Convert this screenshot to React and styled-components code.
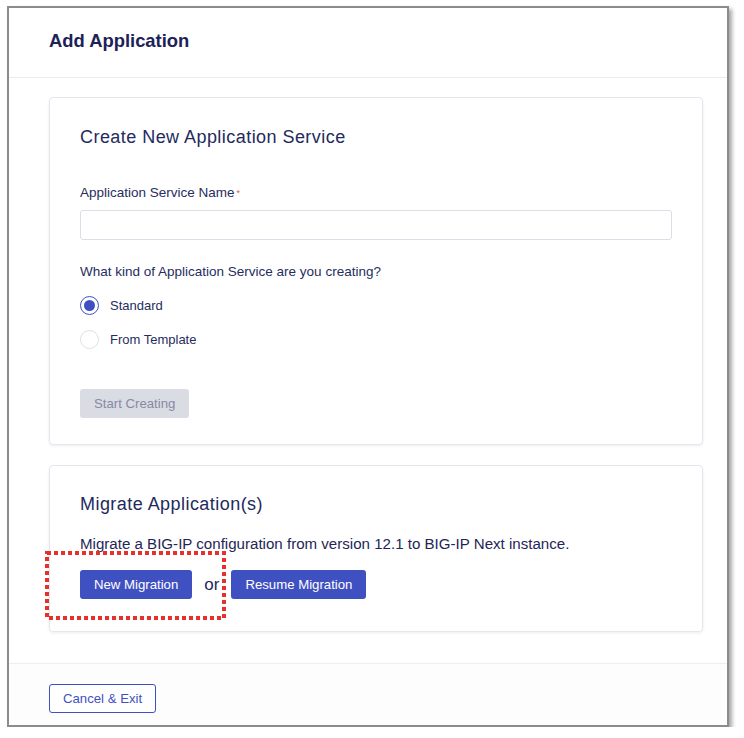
import React from 'react';
import styled, { createGlobalStyle } from 'styled-components';

const GlobalStyle = createGlobalStyle`
  html, body {
    margin: 0;
    padding: 0;
    background: #ffffff;
  }
  body {
    font-family: "Liberation Sans", Arial, sans-serif;
    color: #1f2656;
  }
`;

const Frame = styled.div`
  box-sizing: border-box;
  margin: 6px 0 0 7px;
  width: 722px;
  height: 721px;
  border: 2px solid #8c8c8c;
  box-shadow: 3px 3px 4px rgba(0, 0, 0, 0.35);
  background: #ffffff;
  display: flex;
  flex-direction: column;
`;

const Header = styled.div`
  height: 70px;
  display: flex;
  align-items: center;
  padding: 0 0 3px 40px;
  box-sizing: border-box;
  border-bottom: 1px solid #ebebf2;
`;

const PageTitle = styled.h1`
  margin: 0;
  font-size: 18.4px;
  font-weight: 700;
  color: #1c2257;
`;

const Body = styled.div`
  flex: 1;
  padding: 19px 24px 0 40px;
  display: flex;
  flex-direction: column;
  gap: 20px;
`;

const Card = styled.section`
  border: 1px solid #e6e7ee;
  border-radius: 4px;
  box-shadow: 0 1px 3px rgba(20, 25, 70, 0.08);
  padding: ${(p) => p.$top || 27}px 30px ${(p) => p.$bottom || 26}px;
`;

const CardTitle = styled.h2`
  margin: 0;
  font-size: 18px;
  line-height: 24px;
  font-weight: 400;
  letter-spacing: 0.45px;
  color: #232a5e;
`;

const Label = styled.div`
  margin-top: ${(p) => p.$top}px;
  font-size: 13.5px;
  line-height: 16px;
  color: #262d5e;
`;

const Required = styled.span`
  color: #e5533d;
  font-size: 9px;
  vertical-align: top;
  margin-left: 2px;
`;

const TextInput = styled.input`
  display: block;
  box-sizing: border-box;
  margin-top: 9px;
  width: 592px;
  height: 30px;
  border: 1px solid #dcdde6;
  border-radius: 3px;
  outline: none;
  background: #fff;
`;

const RadioGroup = styled.div`
  margin-top: 15px;
  display: flex;
  flex-direction: column;
  gap: 14px;
`;

const RadioRow = styled.label`
  display: flex;
  align-items: center;
  gap: 11px;
  height: 20px;
  font-size: 13px;
  color: #262d5e;
`;

const RadioCircle = styled.span`
  box-sizing: border-box;
  width: 19px;
  height: 19px;
  border-radius: 50%;
  border: ${(p) => (p.$checked ? '1.5px solid #3f50c4' : '1px solid #dfe0e8')};
  display: flex;
  align-items: center;
  justify-content: center;
  &::after {
    content: '';
    display: ${(p) => (p.$checked ? 'block' : 'none')};
    width: 11px;
    height: 11px;
    border-radius: 50%;
    background: #3f50c4;
  }
`;

const Button = styled.button`
  box-sizing: border-box;
  height: 29px;
  padding: 0 ${(p) => (p.$variant === 'outline' ? 13 : 14)}px;
  font-family: "Liberation Sans", Arial, sans-serif;
  font-size: 13.2px;
  border-radius: 3px;
  cursor: pointer;
  border: ${(p) => (p.$variant === 'outline' ? '1px solid #3f50c4' : 'none')};
  background: ${(p) =>
    p.$variant === 'primary' ? '#3f50c1' : p.$variant === 'disabled' ? '#dadce4' : '#ffffff'};
  color: ${(p) =>
    p.$variant === 'primary' ? '#ffffff' : p.$variant === 'disabled' ? '#868aa3' : '#3f50c4'};
`;

const ButtonWrap = styled.div`
  margin-top: ${(p) => p.$top}px;
`;

const Description = styled.p`
  margin: 19px 0 0;
  font-size: 15.1px;
  line-height: 18px;
  color: #1f2656;
`;

const ActionRow = styled.div`
  position: relative;
  margin-top: 17px;
  display: flex;
  align-items: center;
  gap: 12px;
`;

const Or = styled.span`
  font-size: 17px;
  color: #1f2656;
`;

const Highlight = styled.svg`
  position: absolute;
  left: -35px;
  top: -19px;
  pointer-events: none;
`;

const Footer = styled.div`
  margin-top: 31px;
  flex: 1;
  border-top: 1px solid #ededf3;
  background: #fdfdfd;
  padding: 20px 40px 0;
`;

export default function App() {
  return (
    <>
      <GlobalStyle />
      <Frame>
        <Header>
          <PageTitle>Add Application</PageTitle>
        </Header>

        <Body>
          <Card>
            <CardTitle>Create New Application Service</CardTitle>
            <Label $top={36}>
              Application Service Name<Required>*</Required>
            </Label>
            <TextInput type="text" />
            <Label $top={24}>What kind of Application Service are you creating?</Label>
            <RadioGroup>
              <RadioRow>
                <RadioCircle $checked />
                Standard
              </RadioRow>
              <RadioRow>
                <RadioCircle />
                From Template
              </RadioRow>
            </RadioGroup>
            <ButtonWrap $top={40}>
              <Button $variant="disabled">Start Creating</Button>
            </ButtonWrap>
          </Card>

          <Card $top={26} $bottom={32}>
            <CardTitle>Migrate Application(s)</CardTitle>
            <Description>
              Migrate a BIG-IP configuration from version 12.1 to BIG-IP Next instance.
            </Description>
            <ActionRow>
              <Button $variant="primary">New Migration</Button>
              <Or>or</Or>
              <Button $variant="primary">Resume Migration</Button>
              <Highlight width="181" height="69" viewBox="0 0 181 69">
                <rect
                  x="2"
                  y="2"
                  width="177"
                  height="65"
                  fill="none"
                  stroke="#e8302a"
                  strokeWidth="4"
                  strokeDasharray="4 3"
                />
              </Highlight>
            </ActionRow>
          </Card>
        </Body>

        <Footer>
          <Button $variant="outline">Cancel &amp; Exit</Button>
        </Footer>
      </Frame>
    </>
  );
}
